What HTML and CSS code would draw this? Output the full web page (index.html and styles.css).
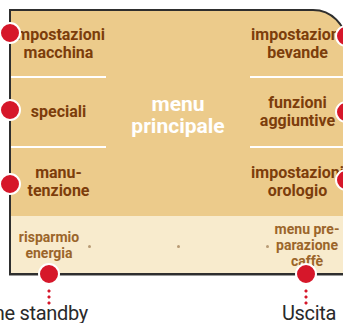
FILE: index.html
```html
<!DOCTYPE html>
<html lang="it">
<head>
<meta charset="utf-8">
<title>menu principale</title>
<link rel="stylesheet" href="styles.css">
</head>
<body>
<div class="page">
	<div class="panel">
		<div class="main">
			<div class="col">
				<div class="cell">impostazioni<br>macchina</div>
				<div class="cell">speciali</div>
				<div class="cell">manu-<br>tenzione</div>
			</div>
			<div class="center">menu<br>principale</div>
			<div class="col">
				<div class="cell">impostazioni<br>bevande</div>
				<div class="cell">funzioni<br>aggiuntive</div>
				<div class="cell">impostazioni<br>orologio</div>
			</div>
		</div>
		<div class="band">
			<div class="band-item">risparmio<br>energia</div>
			<span class="pip"></span>
			<span></span>
			<span class="pip"></span>
			<span></span>
			<span class="pip"></span>
			<div class="band-item">menu pre-<br>parazione<br>caffè</div>
		</div>

		<span class="dot dot-l1"></span>
		<span class="dot dot-l2"></span>
		<span class="dot dot-l3"></span>
		<span class="dot dot-r1"></span>
		<span class="dot dot-r2"></span>
		<span class="dot dot-r3"></span>
		<span class="dot dot-b1 lead"></span>
		<span class="dot dot-b2 lead"></span>
	</div>

	<div class="captions">
		<div class="cap-left"><span>Funzione standby</span></div>
		<div class="cap-right">Uscita</div>
	</div>
</div>
</body>
</html>
```

FILE: styles.css
```css
html, body {
	margin: 0;
	overflow: hidden;
	background: #fff;
}

body {
	font-family: Roboto, "Liberation Sans", sans-serif;
	width: 343px;
	height: 323px;
}

.panel {
	position: relative;
	margin: 9px 0 0 9px;
	width: 334px;
	border: 2px solid #2e2e2e;
	border-top-right-radius: 34px;
	box-shadow: 0 1px 0 #9a9a9a;
	background: #eccb8b;
}

.main {
	display: grid;
	grid-template-columns: 95px 1fr 95px;
	height: 205px;
}

.col {
	display: grid;
	grid-template-rows: 67px 70px 1fr;
}

.cell {
	display: flex;
	align-items: center;
	justify-content: center;
	text-align: center;
	font-size: 16px;
	font-weight: bold;
	line-height: 18px;
	color: #7c3d0b;
	white-space: nowrap;
	border-bottom: 2px solid #fff;
}

.cell:last-child {
	border-bottom: 0;
}

.center {
	display: flex;
	align-items: center;
	justify-content: center;
	text-align: center;
	font-size: 21px;
	font-weight: bold;
	line-height: 22px;
	color: #fff;
	padding-top: 2px;
}

.band {
	display: grid;
	grid-template-columns: 76px 4px 1fr 4px 1fr 4px 76px;
	align-items: center;
	height: 57px;
	background: #f8ebcd;
}

.band-item {
	text-align: center;
	font-size: 14px;
	font-weight: bold;
	line-height: 16px;
	color: #9b652a;
	white-space: nowrap;
}

.pip {
	justify-self: center;
	width: 3px;
	height: 3px;
	border-radius: 50%;
	background: #b89a74;
	margin-top: 3px;
}

.dot {
	position: absolute;
	width: 18px;
	height: 18px;
	border: 2px solid #fff;
	border-radius: 50%;
	background: #d6172a;
}

.dot-l1 { left: -12px; top: 11px; }
.dot-l2 { left: -12px; top: 88px; }
.dot-l3 { left: -12px; top: 162px; }
.dot-r1 { right: -12px; top: 14px; }
.dot-r2 { right: -12px; top: 90px; }
.dot-r3 { right: -12px; top: 158px; }
.dot-b1 { left: 27px; top: 252px; }
.dot-b2 { left: 284px; top: 252px; }

.lead::after {
	content: "";
	position: absolute;
	left: 7px;
	top: 22px;
	width: 4px;
	height: 18px;
	background: radial-gradient(circle, #d6172a 1.3px, transparent 1.8px) 0 1px / 4px 6px repeat-y;
}

.captions {
	display: flex;
	justify-content: space-between;
	margin-top: 26px;
	font-size: 20px;
	line-height: 24px;
	color: #2a2a2a;
	letter-spacing: -0.3px;
	white-space: nowrap;
}

.cap-left {
	display: flex;
	justify-content: flex-end;
	width: 88px;
}

.cap-right {
	width: 60px;
	margin-right: 4px;
	text-align: center;
}
```
